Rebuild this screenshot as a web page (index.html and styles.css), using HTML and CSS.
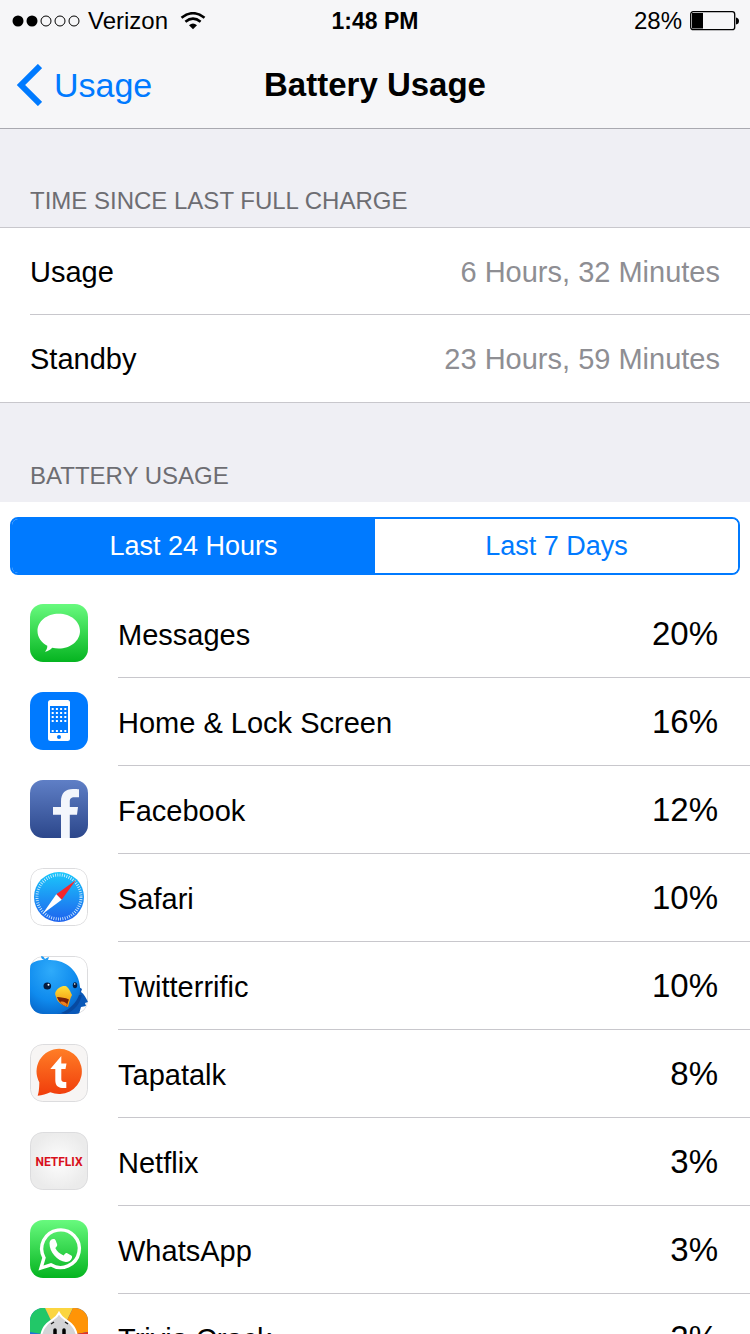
FILE: index.html
```
<!DOCTYPE html>
<html lang="en">
<head>
	<meta charset="UTF-8" />
	<meta name="viewport" content="width=device-width, initial-scale=1.0" />
	<title>Battery Usage</title>
	<link rel="stylesheet" href="styles.css">
</head>
<body>
	<header class="top">
		<div class="status">
			<div class="status-left">
				<svg class="signal" width="69" height="12" viewBox="-1 0 69 12">
					<circle cx="6" cy="6" r="5.5" />
					<circle cx="20" cy="6" r="5.5" />
					<g fill="none" stroke="#000">
						<circle cx="34" cy="6" r="5" />
						<circle cx="48" cy="6" r="5" />
						<circle cx="62" cy="6" r="5" />
					</g>
				</svg>
				<span>Verizon</span>
				<svg class="wifi" width="26" height="18" viewBox="0 0 26 18">
					<g fill="none" stroke="#000" stroke-width="2.6">
						<path d="M1.5 5.8Q13-3.4 24.500 5.800" />
						<path d="M5.400 9.800Q13 3.600 20.600 9.800" />
					</g>
					<path d="M9 13.200Q13 9.600 17 13.200L13 17.300Z" />
				</svg>
			</div>
			<div class="clock">1:48 PM</div>
			<div class="status-right">
				<span>28%</span>
				<svg width="49" height="20" viewBox="0 0 49 20">
					<rect x=".7" y=".7" width="44" height="18" rx="2.500" fill="none" stroke="#000" stroke-width="1.300" />
					<rect x="2" y="2" width="11" height="15.500" />
					<path d="M46 6.500q3 .5 3 3.500t-3 3.500z" />
				</svg>
			</div>
		</div>
		<nav class="nav">
			<a class="back" href="#">
				<svg width="26" height="42" viewBox="0 0 26 42">
					<path d="M24 2L5 21l19 19" fill="none" stroke="#007aff" stroke-width="6" />
				</svg>
				Usage
			</a>
			<h1>Battery Usage</h1>
		</nav>
	</header>

	<main>
		<h2>TIME SINCE LAST FULL CHARGE</h2>
		<dl class="times">
			<div><dt>Usage</dt><dd>6 Hours, 32 Minutes</dd></div>
			<div><dt>Standby</dt><dd>23 Hours, 59 Minutes</dd></div>
		</dl>

		<h2>BATTERY USAGE</h2>
		<section class="usage">
			<div class="tabs">
				<button class="active" type="button" aria-pressed="true">Last 24 Hours</button>
				<button type="button" aria-pressed="false">Last 7 Days</button>
			</div>

			<ul class="apps">
				<li>
					<svg class="icon" viewBox="0 0 58 58">
						<defs>
							<linearGradient id="green" x2="0" y2="1"><stop stop-color="#68fa7e" /><stop offset="1" stop-color="#05b420" /></linearGradient>
						</defs>
						<rect width="58" height="58" fill="url(#green)" />
						<path d="M28.700 9.700c12 0 21.300 7.500 21.300 17.300s-9.300 17.500-21.300 17.500c-2.300 0-4.500-.3-6.500-.8-1.900 2-4.200 3.500-7.400 4 1.700-1.500 2.600-3.600 2.500-6C11.200 38.500 7.500 33.300 7.500 27 7.500 17.200 16.800 9.700 28.700 9.700z" fill="#fff" />
					</svg>
					<div class="row"><span>Messages</span><b>20%</b></div>
				</li>
				<li>
					<svg class="icon" viewBox="0 0 58 58">
						<rect width="58" height="58" fill="#007aff" />
						<rect x="18" y="8" width="22" height="41" rx="2.500" fill="#fff" />
						<rect x="20" y="14" width="18" height="27" fill="#007aff" />
						<g stroke="#fff" stroke-width="2" stroke-dasharray="2 2.200">
							<path d="M21.700 17H37M21.700 21H37M21.700 25H37M21.700 29H37M21.700 39H37" />
						</g>
						<circle cx="29" cy="45" r="2" fill="#007aff" />
					</svg>
					<div class="row"><span>Home &amp; Lock Screen</span><b>16%</b></div>
				</li>
				<li>
					<svg class="icon" viewBox="0 0 58 58">
						<defs>
							<linearGradient id="navy" x2="0" y2="1"><stop stop-color="#5f7fc6" /><stop offset="1" stop-color="#2c478b" /></linearGradient>
						</defs>
						<rect width="58" height="58" fill="url(#navy)" />
						<path d="M31 58V34.700h-8V27h8v-5.500C31 13 35.500 9 43 9c2.500 0 4.600.1 6 .3v8h-4.500c-3.800 0-4.700 1.700-4.700 4.500V27h8.200l-1 7.700h-7.200V58z" fill="#f3f6fc" />
					</svg>
					<div class="row"><span>Facebook</span><b>12%</b></div>
				</li>
				<li>
					<svg class="icon" viewBox="0 0 58 58">
						<defs>
							<linearGradient id="compass" x2="0" y2="1"><stop stop-color="#1bc8fb" /><stop offset="1" stop-color="#1e62ee" /></linearGradient>
						</defs>
						<rect width="58" height="58" fill="#fff" />
						<circle cx="29" cy="29" r="25" fill="url(#compass)" />
						<circle cx="29" cy="29" r="22" fill="none" stroke="#d8f0ff" stroke-width="3" stroke-dasharray=".8 1.504" />
						<path d="M46 12L31.700 31.700l-5.400-5.400z" fill="#f5262c" />
						<path d="M12.500 46l13.800-19.700 5.400 5.400z" fill="#fff" />
						<rect class="edge" x=".5" y=".5" width="57" height="57" rx="12" />
					</svg>
					<div class="row"><span>Safari</span><b>10%</b></div>
				</li>
				<li>
					<svg class="icon" viewBox="0 0 58 58">
						<defs>
							<radialGradient id="bird" cx=".42" cy=".25" r=".85"><stop stop-color="#2fabfa" /><stop offset=".6" stop-color="#0f8bee" /><stop offset="1" stop-color="#0560c4" /></radialGradient>
							<linearGradient id="beak" x2="0" y2="1"><stop stop-color="#ffe13a" /><stop offset="1" stop-color="#f28a08" /></linearGradient>
						</defs>
						<rect width="58" height="58" fill="#fff" />
						<rect class="edge" x=".5" y=".5" width="57" height="57" rx="12" />
						<path d="M49 31l3 2-1 3c3 2 5 6 7 10l-3 1 1 3-5 1-2 7H26z" fill="#0958b8" />
						<path d="M0 9C4 5 9 4 14 4c-2-1-3-2-3-4 2 0 3 1 4 3 1-1 2-1 4-2l-1 3c18-1 31 11 32 27 1 16-9 27-24 27H0z" fill="url(#bird)" />
						<path d="M49 39c-3 8-9 14-18 18l5 1c8-3 14-10 16-19z" fill="#0749a0" />
						<ellipse cx="17.300" cy="30" rx="3.800" ry="3.500" fill="#061b3d" />
						<ellipse cx="45" cy="29.300" rx="2.200" ry="3" fill="#061b3d" />
						<circle cx="18.500" cy="28.700" r="1" fill="#fff" />
						<circle cx="44.700" cy="28" r=".8" fill="#fff" />
						<path d="M25.500 36c2-4 6-6.500 10-6 3 1 5 6 6.500 9-2 3-3 9-4 12-5-1-11-5-11.500-9-.3-2-2-3-1-6z" fill="url(#beak)" />
						<path d="M27 41c4 .5 8 .5 12 2.500-1 2-1.500 5-2.500 7-4-1-8-5-9.500-9.500z" fill="#7a2108" />
						<path d="M30 46c3-1 5 0 7 2l-.6 2.500C34 50 31.500 48 30 46z" fill="#f0801f" />
					</svg>
					<div class="row"><span>Twitterrific</span><b>10%</b></div>
				</li>
				<li>
					<svg class="icon" viewBox="0 0 58 58">
						<defs>
							<linearGradient id="orange" x2="0" y2="1"><stop stop-color="#ff7e26" /><stop offset="1" stop-color="#f03c0b" /></linearGradient>
						</defs>
						<rect width="58" height="58" fill="#f7f5f4" />
						<path d="M29.300 4.700a22.700 22.700 0 1 1-9 43.600c-4 2-8 3-12.600 3.500 1-3 1.500-6.500 1.600-13.500A22.700 22.700 0 0 1 29.300 4.700z" fill="url(#orange)" />
						<path d="M31.300 12v7.500h5.200L35.500 25h-4.200v10c0 2.500 1.300 3 5 3v6c-7.500.5-11-1.500-11-8V25h-5z" fill="#fff" />
						<rect class="edge" x=".5" y=".5" width="57" height="57" rx="12" />
					</svg>
					<div class="row"><span>Tapatalk</span><b>8%</b></div>
				</li>
				<li>
					<svg class="icon" viewBox="0 0 58 58">
						<defs>
							<radialGradient id="silver"><stop stop-color="#fdfdfd" /><stop offset="1" stop-color="#ebebeb" /></radialGradient>
						</defs>
						<rect width="58" height="58" fill="url(#silver)" />
						<text class="netflix" x="29" y="34" text-anchor="middle">NETFLIX</text>
						<rect class="edge" x=".5" y=".5" width="57" height="57" rx="12" />
					</svg>
					<div class="row"><span>Netflix</span><b>3%</b></div>
				</li>
				<li>
					<svg class="icon" viewBox="0 0 58 58">
						<rect width="58" height="58" fill="url(#green)" />
						<path d="M11 48l3-10.300a18.800 18.800 0 1 1 6.800 7.100z" fill="none" stroke="#fff" stroke-width="3.400" />
						<path d="M19.500 23c.4-2.600 2-4.200 4.300-4 1 0 1.500.6 2 1.800l1.300 3.400c.5 1.300-.3 2.200-1.800 3.800 1.800 3.500 4.500 5.900 8.300 7.400 1.300-1.500 2-2.600 3.200-2.300l4.500 2.300c1 .6.9 1.500.5 2.800-.8 2.400-3.300 3.800-6 3.700-8.300-.6-16.600-9.900-16.300-18.900z" fill="#fff" />
					</svg>
					<div class="row"><span>WhatsApp</span><b>3%</b></div>
				</li>
				<li>
					<svg class="icon" viewBox="0 0 58 58">
						<rect width="58" height="58" fill="#1f73d8" />
						<path d="M0 0h15l14 29L0 24z" fill="#22c768" />
						<path d="M15 0h28L29 29z" fill="#fbd540" />
						<path d="M43 0h15v24l-29 5z" fill="#ff9406" />
						<path d="M58 24v34H29V29z" fill="#e8301d" />
						<path d="M29 5c3 6 7 6 12 11 12 12 4 32-12 32S5 28 17 16c5-5 9-5 12-11z" fill="#d4d4d6" stroke="#fff" stroke-width="2" />
						<path d="M25 22v9M34 22v9" stroke="#000" stroke-width="3.500" stroke-linecap="round" />
						<path d="M21 16l3-2M35 14l3 2" stroke="#222" stroke-width="1.500" />
						<path d="M22 36q7 6 14 0" fill="none" stroke="#222" stroke-width="2" />
					</svg>
					<div class="row"><span>Trivia Crack</span><b>2%</b></div>
				</li>
			</ul>
		</section>
	</main>

	<script>
		const tabs = document.querySelectorAll('.tabs button');

		tabs.forEach(tab => {
			tab.addEventListener('click', () => {
				tabs.forEach(t => {
					t.classList.toggle('active', t === tab);
					t.setAttribute('aria-pressed', t === tab);
				});
			});
		});
	</script>
</body>
</html>
```
FILE: styles.css
```
* {
	box-sizing: border-box;
}

body {
	margin: 0;
	height: 100vh;
	display: flex;
	flex-direction: column;
	background: #efeff4;
	color: #000;
	font-family: "Liberation Sans", Arial, sans-serif;
	font-size: 29px;
}

svg {
	display: block;
	flex: none;
}

.top {
	flex: none;
	background: #f6f6f8;
	border-bottom: 1px solid #a9a9b0;
}

.status {
	display: grid;
	grid-template-columns: 1fr auto 1fr;
	align-items: center;
	height: 42px;
	padding: 0 11px;
	font-size: 24px;
}

.status-left,
.status-right {
	display: flex;
	align-items: center;
	gap: 8px;
}

.status-right {
	justify-content: flex-end;
}

.wifi {
	margin-left: 4px;
}

.clock {
	font-size: 23px;
	font-weight: bold;
}

.nav {
	display: grid;
	grid-template-columns: 1fr auto 1fr;
	align-items: center;
	height: 86px;
	padding: 0 16px;
}

.back {
	display: flex;
	align-items: center;
	gap: 12px;
	color: #007aff;
	font-size: 34px;
	text-decoration: none;
}

h1 {
	margin: 0;
	font-size: 33px;
}

main {
	flex: 1;
	overflow-y: auto;
	scrollbar-width: none;
}

h2 {
	display: flex;
	align-items: flex-end;
	height: 99px;
	margin: 0;
	padding: 0 30px 12px;
	color: #6d6d72;
	font-size: 24px;
	font-weight: normal;
}

h2:first-child {
	height: 98px;
}

.times {
	margin: 0;
	padding-left: 30px;
	background: #fff;
	border-top: 1px solid #c8c7cc;
	border-bottom: 1px solid #c8c7cc;
}

.times div {
	display: flex;
	align-items: center;
	justify-content: space-between;
	height: 86px;
	padding-right: 30px;
}

.times div + div {
	height: 88px;
	border-top: 1px solid #c8c7cc;
}

.times dd {
	margin: 0;
	color: #8e8e93;
}

.times dt,
.times dd {
	padding-top: 2px;
}

.usage {
	padding-top: 15px;
	background: #fff;
}

.tabs {
	display: flex;
	height: 58px;
	margin: 0 10px;
	overflow: hidden;
	border: 2px solid #007aff;
	border-radius: 8px;
}

.tabs button {
	flex: 1;
	padding: 0;
	border: none;
	background: #fff;
	color: #007aff;
	font-family: inherit;
	font-size: 27px;
	cursor: pointer;
}

.tabs .active {
	background: #007aff;
	color: #fff;
}

.apps {
	margin: 15px 0 0;
	padding: 0 0 0 30px;
	list-style: none;
}

.apps li {
	display: flex;
	align-items: center;
	gap: 30px;
	height: 88px;
}

.icon {
	width: 58px;
	height: 58px;
	margin-bottom: 2px;
	border-radius: 13px;
}

.edge {
	fill: none;
	stroke: #dcdcde;
}

.netflix {
	fill: #d8101c;
	font-family: Roboto, "Liberation Sans", sans-serif;
	font-size: 12px;
	font-weight: bold;
}

.row {
	flex: 1;
	display: flex;
	align-items: center;
	justify-content: space-between;
	height: 88px;
	padding-right: 32px;
	border-bottom: 1px solid #c8c7cc;
}

.row span {
	padding-top: 4px;
}

.row b {
	font-size: 33px;
	font-weight: normal;
}
```
